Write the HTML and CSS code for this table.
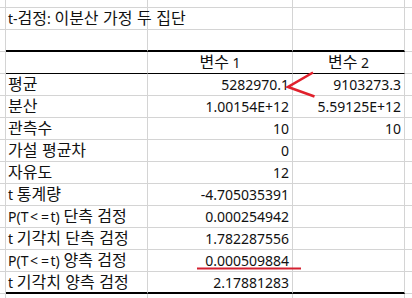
FILE: index.html
```html
<!DOCTYPE html>
<html lang="ko">
<head>
<meta charset="utf-8">
<title>t-검정: 이분산 가정 두 집단</title>
<link rel="stylesheet" href="styles.css">
</head>
<body>
<div class="sheet">
  <div class="c"></div><div class="c"></div><div class="c"></div><div class="c"></div><div class="c last"></div>

  <div class="c"></div><div class="c t title">t-<span class="k">검정</span>: <span class="k">이분산 가정 두 집단</span></div><div class="c"></div><div class="c"></div><div class="c last"></div>

  <div class="c"></div><div class="c top"></div><div class="c top"></div><div class="c top"></div><div class="c last"></div>

  <div class="c"></div><div class="c hd"></div><div class="c hd ctr"><span class="k">변수</span> 1</div><div class="c hd ctr"><span class="k">변수</span> 2</div><div class="c last"></div>

  <div class="c"></div><div class="c t"><span class="k">평균</span></div><div class="c n">5282970.1</div><div class="c n">9103273.3</div><div class="c last"></div>
  <div class="c"></div><div class="c t"><span class="k">분산</span></div><div class="c n">1.00154E+12</div><div class="c n">5.59125E+12</div><div class="c last"></div>
  <div class="c"></div><div class="c t"><span class="k">관측수</span></div><div class="c n">10</div><div class="c n">10</div><div class="c last"></div>
  <div class="c"></div><div class="c t"><span class="k">가설 평균차</span></div><div class="c n">0</div><div class="c n"></div><div class="c last"></div>
  <div class="c"></div><div class="c t"><span class="k">자유도</span></div><div class="c n">12</div><div class="c n"></div><div class="c last"></div>
  <div class="c"></div><div class="c t">t <span class="k">통계량</span></div><div class="c n">-4.705035391</div><div class="c n"></div><div class="c last"></div>
  <div class="c"></div><div class="c t">P(T<span class="op">&lt;</span><span class="op">=</span>t) <span class="k">단측 검정</span></div><div class="c n">0.000254942</div><div class="c n"></div><div class="c last"></div>
  <div class="c"></div><div class="c t">t <span class="k">기각치 단측 검정</span></div><div class="c n">1.782287556</div><div class="c n"></div><div class="c last"></div>
  <div class="c"></div><div class="c t">P(T<span class="op">&lt;</span><span class="op">=</span>t) <span class="k">양측 검정</span></div><div class="c n">0.000509884</div><div class="c n"></div><div class="c last"></div>
  <div class="c"></div><div class="c t bot">t <span class="k">기각치 양측 검정</span></div><div class="c n bot">2.17881283</div><div class="c n bot"></div><div class="c last"></div>

  <div class="c"></div><div class="c"></div><div class="c"></div><div class="c"></div><div class="c last"></div>

  <svg class="marks" width="412" height="298" viewBox="0 0 412 298" aria-hidden="true">
    <polyline points="313,72.5 288,87 314.5,96.5" fill="none" stroke="#e0202c" stroke-width="2.6" stroke-linejoin="miter"/>
    <line x1="197" y1="268.5" x2="301" y2="268.5" stroke="#d42030" stroke-width="2"/>
  </svg>
</div>
</body>
</html>
```
FILE: styles.css
```css
html, body {
  margin: 0;
  padding: 0;
  background: #ffffff;
}

body {
  width: 412px;
  height: 298px;
  overflow: hidden;
  font-family: "Noto Sans", "Noto Sans CJK KR", sans-serif;
  font-size: 14px;
  color: #111111;
}

.sheet {
  position: relative;
  display: grid;
  grid-template-columns: 6px 142px 145px 112px 1fr;
  grid-template-rows: 8px repeat(13, 22px) 5px;
  width: 412px;
  height: 298px;
  overflow: hidden;
}

.c {
  box-sizing: border-box;
  border-right: 1px solid #d4d4d4;
  border-bottom: 1px solid #d4d4d4;
  line-height: 21px;
  white-space: nowrap;
  overflow: visible;
  min-width: 0;
}

.last {
  border-right: none;
}

.t {
  padding-left: 2px;
}

.k {
  font-family: "Noto Sans CJK KR", sans-serif;
  font-size: 16px;
  line-height: 16px;
}

.op {
  margin: 0 1.5px;
}

.title {
  position: relative;
  z-index: 1;
}

.n {
  text-align: right;
  padding-right: 3px;
}

.ctr {
  text-align: center;
}

.top {
  border-bottom: 2px solid #000000;
}

.hd {
  border-bottom: 1px solid #000000;
}

.bot {
  border-bottom: 2px solid #000000;
}

.marks {
  position: absolute;
  left: 0;
  top: 0;
  pointer-events: none;
}
```
